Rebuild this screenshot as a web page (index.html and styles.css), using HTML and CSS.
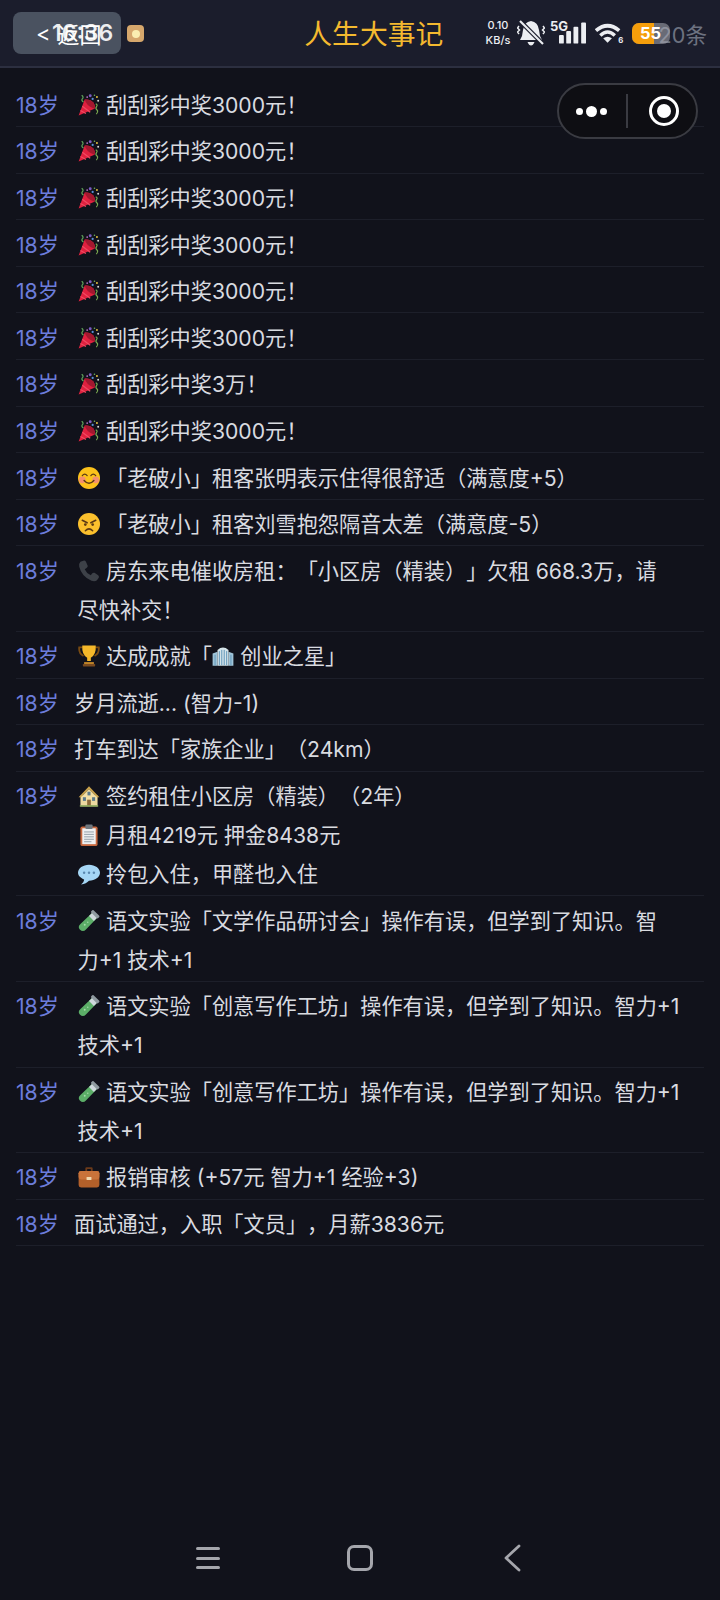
FILE: index.html
```html
<!DOCTYPE html>
<html lang="zh-CN">
<head>
<meta charset="utf-8">
<title>人生大事记</title>
<link rel="stylesheet" href="styles.css">
</head>
<body>
<svg class="defs" aria-hidden="true">
  <symbol id="e-party" viewBox="0 0 36 36">
    <path d="M1 35 L11 9 Q20 8 25 14 Q29 20 27 24 Z" fill="#e0213f"/>
    <path d="M11 9 Q20 8 25 14 Q29 20 27 24 Q20 22 16 18 Q12 14 11 9Z" fill="#a3182f"/>
    <path d="M7 20 L20 30 M4 27 L13 32" stroke="#f04a62" stroke-width="2"/>
    <path d="M6 2 Q10 5 7 8 Q5 11 9 13" stroke="#5fa35a" stroke-width="2" fill="none"/>
    <path d="M29 16 Q33 18 30 21 Q28 24 32 27 Q33 30 30 33" stroke="#7aa950" stroke-width="2" fill="none"/>
    <circle cx="20" cy="3" r="2.400" fill="#7b5cc4"/><circle cx="24" cy="8" r="1.800" fill="#5a8fd8"/>
    <circle cx="31" cy="5" r="1.600" fill="#e6c340"/><circle cx="33" cy="11" r="1.600" fill="#d8d8d8"/>
    <circle cx="15" cy="5" r="1.500" fill="#b86bc4"/><circle cx="27" cy="2" r="1.300" fill="#6fb35a"/>
  </symbol>
  <symbol id="e-smile" viewBox="0 0 36 36">
    <circle cx="18" cy="18" r="18" fill="#fcc21b"/>
    <circle cx="7" cy="21" r="5.500" fill="#f2877c" opacity=".85"/><circle cx="29" cy="21" r="5.500" fill="#f2877c" opacity=".85"/>
    <path d="M7 14 Q11 9 15 14 M21 14 Q25 9 29 14" stroke="#5c3a14" stroke-width="2" fill="none" stroke-linecap="round"/>
    <path d="M10 22 Q18 31 26 22" stroke="#5c3a14" stroke-width="2.400" fill="none" stroke-linecap="round"/>
  </symbol>
  <symbol id="e-angry" viewBox="0 0 36 36">
    <circle cx="18" cy="18" r="18" fill="#fbc02d"/>
    <path d="M7 12 L15 16 M29 12 L21 16" stroke="#5c3a14" stroke-width="2.600" stroke-linecap="round"/>
    <circle cx="12" cy="19" r="2.200" fill="#5c3a14"/><circle cx="24" cy="19" r="2.200" fill="#5c3a14"/>
    <path d="M12 29 Q18 23 24 29" stroke="#5c3a14" stroke-width="2.400" fill="none" stroke-linecap="round"/>
  </symbol>
  <symbol id="e-phone" viewBox="0 0 36 36">
    <path d="M4 3 L10 1 Q12 1 13 3 L16 10 Q16 12 14 13 L11 15 Q14 22 21 25 L23 22 Q25 20 27 21 L33 25 Q35 27 34 29 L31 33 Q28 36 22 34 Q6 27 2 11 Q1 6 4 3Z" fill="#3d4148"/>
  </symbol>
  <symbol id="e-trophy" viewBox="0 0 36 36">
    <path d="M8 4 H2 Q1 14 9 18 M28 4 H34 Q35 14 27 18" stroke="#7a4b12" stroke-width="3" fill="none"/>
    <path d="M7 1 H29 Q30 16 21 21 V26 H15 V21 Q6 16 7 1Z" fill="#f5b82a"/>
    <rect x="10" y="28" width="16" height="3" fill="#c98b2a"/><rect x="8" y="31" width="20" height="4" rx="1" fill="#7a4b20"/>
  </symbol>
  <symbol id="e-office" viewBox="0 0 36 36">
    <path d="M1 14 L9 11 V34 H1Z M27 11 L35 14 V34 H27Z" fill="#9fc4d8"/>
    <path d="M9 8 Q18 0 27 8 V34 H9Z" fill="#d5e4ea"/>
    <path d="M12 10 V33 M16 8 V33 M20 8 V33 M24 10 V33 M5 16 V33 M31 16 V33" stroke="#5f96b8" stroke-width="1.600"/>
  </symbol>
  <symbol id="e-house" viewBox="0 0 36 36">
    <rect x="4" y="17" width="28" height="18" fill="#ecd9a0"/>
    <path d="M1 20 L18 2 L35 20 L31 20 L18 7 L5 20Z" fill="#c9a24c"/>
    <path d="M18 7 L31 20 V24 H5 V20Z" fill="#f2dfa6"/>
    <rect x="8" y="20" width="5" height="6" fill="#5c7b8c"/><rect x="23" y="20" width="5" height="6" fill="#5c7b8c"/>
    <rect x="15" y="24" width="6" height="11" fill="#8c6a3a"/><rect x="15.500" y="11" width="5" height="6" fill="#5c7b8c"/>
    <rect x="3" y="33" width="30" height="2.500" fill="#88a85a"/>
  </symbol>
  <symbol id="e-clip" viewBox="0 0 36 36">
    <rect x="4" y="4" width="28" height="32" rx="3" fill="#c7683f"/>
    <rect x="7" y="7" width="22" height="26" fill="#eef0f2"/>
    <rect x="12" y="1" width="12" height="7" rx="2" fill="#707880"/>
    <path d="M10 13 H26 M10 17 H26 M10 21 H26 M10 25 H26 M10 29 H22" stroke="#8d99a3" stroke-width="1.500"/>
  </symbol>
  <symbol id="e-speech" viewBox="0 0 36 36">
    <path d="M18 3 C8 3 0 9 0 16 C0 21 5 25 10 27 C10 30 8 33 5 35 C11 35 15 32 18 29 C28 29 36 23 36 16 C36 9 28 3 18 3Z" fill="#a5d6f5"/>
    <circle cx="10" cy="16" r="2" fill="#5b89b0"/><circle cx="18" cy="16" r="2" fill="#5b89b0"/><circle cx="26" cy="16" r="2" fill="#5b89b0"/>
  </symbol>
  <symbol id="e-tube" viewBox="0 0 36 36">
    <path d="M25 3 L33 11 L13 32 Q8 37 3 32 Q-1 27 4 23Z" fill="#5cae68"/>
    <path d="M25 3 L33 11 L26 18 L18 10Z" fill="#cfd8dc"/>
    <rect x="20" y="4" width="16" height="5.500" rx="2" transform="rotate(45 28 7)" fill="#8f9aa0"/>
    <circle cx="11" cy="24" r="1.600" fill="#a5dba8"/><circle cx="16" cy="20" r="1.200" fill="#a5dba8"/>
  </symbol>
  <symbol id="e-case" viewBox="0 0 36 36">
    <path d="M12 9 V4 Q12 2 14 2 H22 Q24 2 24 4 V9 H21 V5 H15 V9Z" fill="#6b3a1a"/>
    <rect x="1" y="8" width="34" height="27" rx="4" fill="#b3602a"/>
    <rect x="1" y="8" width="34" height="14" rx="4" fill="#c9733a"/>
    <rect x="14" y="18" width="8" height="5" rx="1" fill="#f0d9b0"/>
  </symbol>
</svg>

<div class="page">
  <header class="navbar">
    <div class="back"><span class="chev">&lt;</span><span>返回</span></div>
    <h1 class="title">人生大事记</h1>
    <div class="count">20条</div>
  </header>

  <ul class="list">
    <li class="row"><span class="age">18岁</span><div class="msg"><svg class="emoji"><use href="#e-party"/></svg> 刮刮彩中奖3000元！</div></li>
    <li class="row"><span class="age">18岁</span><div class="msg"><svg class="emoji"><use href="#e-party"/></svg> 刮刮彩中奖3000元！</div></li>
    <li class="row"><span class="age">18岁</span><div class="msg"><svg class="emoji"><use href="#e-party"/></svg> 刮刮彩中奖3000元！</div></li>
    <li class="row"><span class="age">18岁</span><div class="msg"><svg class="emoji"><use href="#e-party"/></svg> 刮刮彩中奖3000元！</div></li>
    <li class="row"><span class="age">18岁</span><div class="msg"><svg class="emoji"><use href="#e-party"/></svg> 刮刮彩中奖3000元！</div></li>
    <li class="row"><span class="age">18岁</span><div class="msg"><svg class="emoji"><use href="#e-party"/></svg> 刮刮彩中奖3000元！</div></li>
    <li class="row"><span class="age">18岁</span><div class="msg"><svg class="emoji"><use href="#e-party"/></svg> 刮刮彩中奖3万！</div></li>
    <li class="row"><span class="age">18岁</span><div class="msg"><svg class="emoji"><use href="#e-party"/></svg> 刮刮彩中奖3000元！</div></li>
    <li class="row"><span class="age">18岁</span><div class="msg"><svg class="emoji"><use href="#e-smile"/></svg> 「老破小」租客张明表示住得很舒适（满意度+5）</div></li>
    <li class="row"><span class="age">18岁</span><div class="msg"><svg class="emoji"><use href="#e-angry"/></svg> 「老破小」租客刘雪抱怨隔音太差（满意度-5）</div></li>
    <li class="row"><span class="age">18岁</span><div class="msg"><svg class="emoji"><use href="#e-phone"/></svg> 房东来电催收房租：「小区房（精装）」欠租 668.3万，请<br>尽快补交！</div></li>
    <li class="row"><span class="age">18岁</span><div class="msg"><svg class="emoji"><use href="#e-trophy"/></svg> 达成成就「<svg class="emoji"><use href="#e-office"/></svg> 创业之星」</div></li>
    <li class="row"><span class="age">18岁</span><div class="msg plain">岁月流逝... (智力-1)</div></li>
    <li class="row"><span class="age">18岁</span><div class="msg plain">打车到达「家族企业」（24km）</div></li>
    <li class="row"><span class="age">18岁</span><div class="msg"><svg class="emoji"><use href="#e-house"/></svg> 签约租住小区房（精装）（2年）<br><svg class="emoji"><use href="#e-clip"/></svg> 月租4219元 押金8438元<br><svg class="emoji"><use href="#e-speech"/></svg> 拎包入住，甲醛也入住</div></li>
    <li class="row"><span class="age">18岁</span><div class="msg"><svg class="emoji"><use href="#e-tube"/></svg> 语文实验「文学作品研讨会」操作有误，但学到了知识。智<br>力+1 技术+1</div></li>
    <li class="row"><span class="age">18岁</span><div class="msg"><svg class="emoji"><use href="#e-tube"/></svg> 语文实验「创意写作工坊」操作有误，但学到了知识。智力+1<br>技术+1</div></li>
    <li class="row"><span class="age">18岁</span><div class="msg"><svg class="emoji"><use href="#e-tube"/></svg> 语文实验「创意写作工坊」操作有误，但学到了知识。智力+1<br>技术+1</div></li>
    <li class="row"><span class="age">18岁</span><div class="msg"><svg class="emoji"><use href="#e-case"/></svg> 报销审核 (+57元 智力+1 经验+3)</div></li>
    <li class="row"><span class="age">18岁</span><div class="msg plain">面试通过，入职「文员」，月薪3836元</div></li>
  </ul>

  <div class="statusbar">
    <span class="time">16:36</span>
    <span class="cam"><i></i></span>
    <div class="status-right">
      <span class="speed">0.10<br>KB/s</span>
      <svg class="st-bell" viewBox="0 0 28 26">
        <path d="M14 1 Q21 2 22 10 L23 16 L25 20 H3 L5 16 L6 10 Q7 2 14 1Z" fill="#eceef2"/>
        <path d="M10.500 22 H17.500 Q16 25.500 14 25.500 Q12 25.500 10.500 22Z" fill="#eceef2"/>
        <path d="M3 1 L26 24" stroke="#1b1d2c" stroke-width="4.500"/>
        <path d="M3 1 L26 24" stroke="#eceef2" stroke-width="2.200"/>
        <path d="M2 6 L0.500 8 L2.500 10 L0.500 12 L2 14 M26 6 L27.500 8 L25.500 10 L27.500 12 L26 14" stroke="#eceef2" stroke-width="1.500" fill="none"/>
      </svg>
      <div class="st-signal">
        <span class="st-5g">5G</span>
        <svg viewBox="0 0 28 22" class="st-bars">
          <rect x="0" y="13" width="5" height="9" rx="1" fill="#eceef2"/>
          <rect x="7.500" y="9" width="5" height="13" rx="1" fill="#eceef2"/>
          <rect x="15" y="4.500" width="5" height="17.500" rx="1" fill="#eceef2"/>
          <rect x="23" y="0" width="5" height="22" rx="1" fill="#eceef2"/>
        </svg>
      </div>
      <svg class="st-wifi" viewBox="0 0 30 22">
        <path d="M1 8.500 Q13 -1.500 25 8.500" stroke="#eceef2" stroke-width="3.800" fill="none"/>
        <path d="M5.500 13.500 Q13 6.500 20.500 13.500" stroke="#eceef2" stroke-width="3.600" fill="none"/>
        <path d="M8.500 16.500 Q13 13 17.500 16.500 L13 21Z" fill="#eceef2"/>
        <text x="24" y="21.500" class="st-wifi-n">6</text>
      </svg>
      <div class="battery"><span class="battery-fill"></span><span class="battery-num">55</span></div>
    </div>
  </div>

  <div class="capsule">
    <div class="cap-dots"><i></i><i class="big"></i><i></i></div>
    <span class="cap-div"></span>
    <div class="cap-ring"><i></i></div>
  </div>

  <nav class="sysnav">
    <div class="sys-menu"><i></i><i></i><i></i></div>
    <div class="sys-home"></div>
    <svg class="sys-back" viewBox="0 0 18 28"><path d="M16 2 L3 14 L16 26" stroke="#a5a6ac" stroke-width="2.800" fill="none" stroke-linecap="round" stroke-linejoin="round"/></svg>
  </nav>
</div>
</body>
</html>
```

FILE: styles.css
```css
* { box-sizing: border-box; }
html, body { margin: 0; padding: 0; }
body {
  background: #11121b;
  font-family: Inter, "Noto Sans CJK SC", "Noto Sans", sans-serif;
  color: #d9dbe0;
  text-spacing-trim: space-all;
}
.defs { position: absolute; width: 0; height: 0; overflow: hidden; }
.page { position: relative; width: 720px; height: 1600px; background: #11121b; overflow: hidden; }

.navbar {
  display: flex;
  align-items: center;
  height: 68px;
  padding: 0 13px;
  background: #1b1d2c;
  border-bottom: 2px solid #2c2f40;
}
.back {
  display: flex;
  align-items: center;
  gap: 7px;
  width: 108px;
  height: 42px;
  padding-left: 23px;
  border-radius: 8px;
  background: #4a5260;
  color: #fff;
  font-size: 22px;
}
.title {
  flex: 1;
  margin: 0 32px 2px 0;
  text-align: center;
  font-size: 27.800px;
  font-weight: 400;
  color: #f4b92f;
}
.count { font-size: 21.600px; color: #6d7280; }

.list { list-style: none; margin: 0; padding: 12.500px 16px 0; }
.row {
  display: flex;
  padding: 5.250px 0 1.350px;
  border-bottom: 1px solid #1d1f2a;
  font-size: 21.200px;
  line-height: 39px;
}
.age { flex: none; width: 58px; color: #6c7ddb; }
.msg { flex: 1; padding-left: 3.500px; color: #d9dbe0; white-space: nowrap; }
.msg.plain { padding-left: 0; }
.emoji { display: inline-block; width: 22px; height: 22px; margin: 0 0.500px 0 0; vertical-align: -3px; }

.statusbar { position: absolute; left: 0; top: 0; width: 720px; height: 68px; }
.time { position: absolute; left: 52px; top: 19px; font-size: 23px; font-weight: 600; color: #fff; opacity: .9; }
.cam { position: absolute; left: 127px; top: 25px; width: 17px; height: 17px; border-radius: 4px; background: #d6a76c; display: flex; align-items: center; justify-content: center; }
.cam i { width: 8px; height: 8px; border-radius: 50%; background: #fbeeb0; }
.status-right { position: absolute; left: 485px; top: 18px; display: flex; align-items: center; height: 30px; }
.speed { width: 26px; font-size: 11px; line-height: 15px; font-weight: 500; text-align: center; color: #eceef2; white-space: nowrap; }
.st-bell { width: 28px; height: 26px; margin-left: 6px; }
.st-signal { position: relative; width: 37px; height: 26px; margin-left: 5px; }
.st-5g { position: absolute; left: 0; top: -2px; font-size: 13px; font-weight: 700; color: #eceef2; }
.st-bars { position: absolute; left: 9px; top: 2px; width: 27px; height: 22px; }
.st-wifi { width: 29px; height: 22px; margin-left: 8px; }
.st-wifi-n { font-size: 8px; font-weight: 700; fill: #eceef2; }
.battery { position: relative; width: 38px; height: 21px; margin-left: 8px; border-radius: 7px; background: rgba(170,172,180,.55); overflow: hidden; }
.battery-fill { position: absolute; left: 0; top: 0; bottom: 0; width: 58%; background: #f59e0b; }
.battery-num { position: absolute; left: 8px; top: 0; font-size: 16.500px; line-height: 21px; font-weight: 700; color: #fff; }

.capsule {
  position: absolute; left: 557px; top: 83px;
  display: flex; align-items: center;
  width: 141px; height: 56px;
  border: 2px solid #3a3b42; border-radius: 28px;
  background: #0e0e13;
}
.cap-dots { display: flex; align-items: center; justify-content: center; gap: 3px; width: 64px; margin-right: 3px; }
.cap-dots i { width: 7px; height: 7px; border-radius: 50%; background: #fff; }
.cap-dots i.big { width: 11px; height: 11px; }
.cap-div { width: 2px; height: 34px; background: #3a3b42; }
.cap-ring { display: flex; align-items: center; justify-content: center; width: 30px; height: 30px; margin-left: 21px; border: 3px solid #fff; border-radius: 50%; }
.cap-ring i { width: 14px; height: 14px; border-radius: 50%; background: #fff; }

.sysnav { position: absolute; left: 0; bottom: 0; width: 720px; height: 80px; }
.sys-menu { position: absolute; left: 196px; top: 27px; width: 24px; display: flex; flex-direction: column; gap: 6.500px; }
.sys-menu i { display: block; height: 3px; border-radius: 2px; background: #a5a6ac; }
.sys-home { position: absolute; left: 347px; top: 25px; width: 26px; height: 26px; border: 3px solid #a5a6ac; border-radius: 7px; }
.sys-back { position: absolute; left: 503px; top: 24px; width: 18px; height: 28px; }
```
